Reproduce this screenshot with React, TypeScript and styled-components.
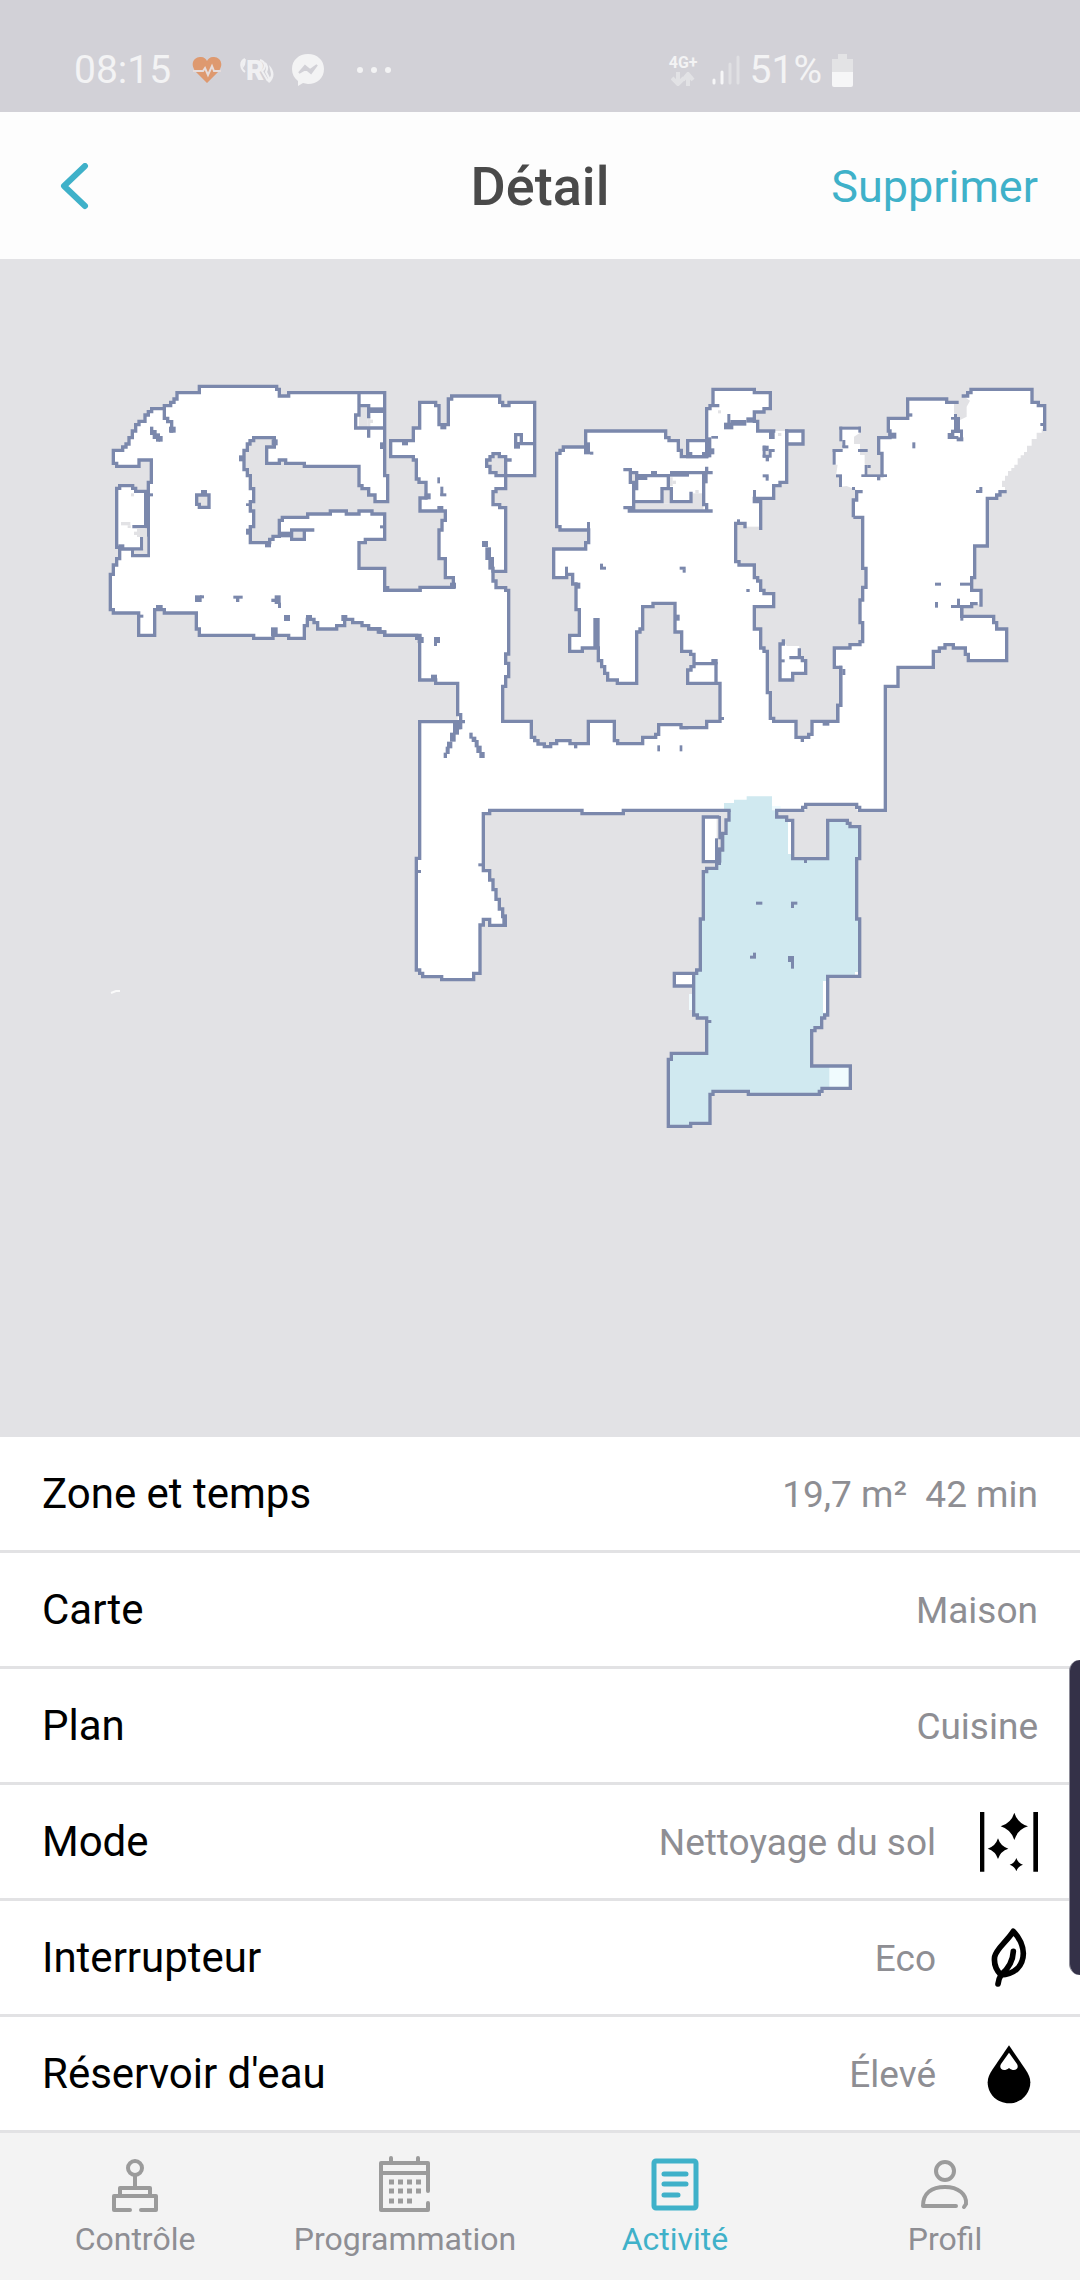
import React from "react";
import styled, { createGlobalStyle } from "styled-components";

const GlobalStyle = createGlobalStyle`
  * { box-sizing: border-box; }
  body { margin: 0; background: #f3f3f3; font-family: Roboto, "Liberation Sans", sans-serif; }
`;

const teal = "#3fb1c9";
const floorGrey = "#e2e2e5";
const wallBlue = "#7b88ac";

const Screen = styled.div`
  display: flex;
  flex-direction: column;
  width: 100%;
`;

const StatusBar = styled.div`
  display: flex;
  align-items: center;
  justify-content: space-between;
  height: 112px;
  padding: 28px 226px 0 74px;
  background: #d2d1d7;
  color: #f3f3f4;
  font-size: 39px;
  line-height: 44px;
`;

const StatusGroup = styled.div<{ $gap: number }>`
  display: flex;
  align-items: center;
  gap: ${(p) => p.$gap}px;
`;

const Clock = styled.span`
  padding-right: 3px;
`;

const Network = styled.div`
  display: flex;
  flex-direction: column;
  align-items: center;
  margin-right: 4px;
  font-size: 16px;
  font-weight: 700;
  line-height: 18px;
`;

const Dots = styled.svg`
  margin-left: 14px;
`;

const Header = styled.header`
  display: grid;
  grid-template-columns: 1fr auto 1fr;
  align-items: center;
  height: 147px;
  padding: 2px 42px 0;
  background: #fdfdfd;
`;

const Title = styled.h1`
  margin: 0;
  color: #4a4a4a;
  font-size: 54px;
  font-weight: 500;
  line-height: 60px;
`;

const HeaderButton = styled.button<{ $end?: boolean }>`
  display: flex;
  justify-self: ${(p) => (p.$end ? "end" : "start")};
  padding: ${(p) => (p.$end ? "0" : "0 14px")};
  border: 0;
  background: none;
  color: ${teal};
  font: inherit;
  font-size: 45px;
  line-height: 52px;
`;

const MapArea = styled.main`
  background: ${floorGrey};
`;

const MapDrawing = styled.svg`
  display: block;
  width: 100%;
  height: auto;
`;

const Details = styled.section`
  position: relative;
  background: #fff;
`;

const DetailList = styled.dl`
  margin: 0;
`;

const Row = styled.div`
  display: flex;
  align-items: center;
  height: 116px;
  padding: 0 42px;
  border-bottom: 3px solid #e2e2e4;
`;

const Label = styled.dt`
  flex: 1;
  color: #000;
  font-size: 42px;
  line-height: 48px;
`;

const Value = styled.dd`
  display: flex;
  align-items: center;
  gap: 42px;
  margin: 0;
  color: #8e8e93;
  font-size: 37px;
  line-height: 44px;
  white-space: pre;
`;

const ValueText = styled.span`
  padding-top: 2px;
`;

const EdgeHandle = styled.div`
  position: absolute;
  top: 223px;
  right: 0;
  width: 11px;
  height: 315px;
  border-left: 1px solid #8e8d99;
  border-radius: 14px 0 0 14px;
  background: #343148;
`;

const TabBar = styled.nav`
  display: grid;
  grid-template-columns: repeat(4, 1fr);
  height: 147px;
  background: #f3f3f3;
`;

const Tab = styled.button<{ $active?: boolean }>`
  display: flex;
  flex-direction: column;
  align-items: center;
  gap: 4px;
  padding: 23px 0 0;
  border: 0;
  background: none;
  color: ${(p) => (p.$active ? teal : "#8e8e93")};
  font: inherit;
  font-size: 32px;
  line-height: 38px;

  svg { color: ${(p) => (p.$active ? teal : "#9b9b9b")}; }
`;

type Blob = [number, number, number, number];

/* Each survey tile is traced at three units per map pixel from its own origin. */
interface Tile {
  x: number;
  y: number;
  walls: string;
  floorEnd?: string;
  details?: string;
  blobs?: Blob[];
  gaps?: Blob[];
}

const tiles: Tile[] = [
  {
    x: 90,
    y: 360,
    walls:
      "M990,826H884V816H865V807H836V797H816V788H788V778H764V797H740V807H683V788H672V778H652V797H643V835H596V826H549V835H491V826H328V807H319V759H223V749H194V826H146V759H70V749H61V643H70V615H80V596H89V567H128V587H175V367H184V300H147V319H80V310H70V271H98V261H108V252H117V233H127V213H137V194H147V184H165V165H175V155H185V146H223V137H242V127H252V117H261V98H328V79H560V88H568V108H596V98H884V347H893V425H855V405H836V386H816V377H807V319H643V310H587V300H568V310H530V261H553V233H491V242H480V252H472V271H462V329H472V347H481V386H491V425H481V453H491V500H481V548H539V538H549V529H568V481H577V472H653V462H721V453H769V462H807V453H846V462H884V538H826V548H807V625H884V683H893V691H990",
    details:
      "M807,98V165H797V204H884M807,137H836V170M836,204V228M223,146V175H233V185H245V213M640,510H668M132,500H165M155,534V567H89M605,510H643V538H605V515M320,405H357V442H328V433H320V405",
    blobs: [
      [836, 142, 50, 17], [870, 247, 12, 20], [237, 200, 20, 18], [180, 200, 10, 25], [188, 210, 12, 27], [198, 220, 12, 25], [206, 228, 12, 17],
      [447, 286, 12, 18], [333, 390, 18, 12], [468, 430, 12, 8], [468, 506, 14, 18], [525, 548, 18, 14], [565, 515, 40, 17], [870, 496, 12, 9],
      [315, 706, 20, 20], [330, 706, 12, 9], [430, 707, 28, 9], [438, 712, 10, 14], [554, 706, 18, 26], [544, 716, 14, 10], [564, 728, 9, 16],
      [582, 765, 18, 18], [543, 802, 20, 26], [754, 765, 18, 18], [648, 765, 18, 15], [198, 735, 20, 16], [146, 764, 14, 9], [175, 400, 14, 9],
      [162, 394, 17, 108], [85, 553, 18, 17], [545, 238, 18, 18],
    ],
    gaps: [[807, 141, 26, 60], [833, 170, 8, 30], [840, 179, 9, 10], [610, 515, 30, 20], [324, 409, 30, 24], [332, 430, 22, 9]],
  },
  {
    x: 90,
    y: 360,
    walls: "M94,562H80V385H89V377H128V385H137V394H175",
    floorEnd: "V500H165V567H94Z",
    gaps: [[93, 486, 28, 10], [113, 496, 9, 8], [123, 400, 9, 9], [132, 390, 9, 9], [132, 515, 24, 10], [141, 505, 30, 26], [160, 530, 12, 52], [132, 572, 38, 10]],
  },
  {
    x: 370,
    y: 360,
    walls:
      "M44,691H150V682H250V653H226V596H207V510H216V481H226V453H150V414H168V367H147V357H139V300H130V290H62V242H130V204H149V127H197V137H207V194H235V117H245V108H389V127H398V137H417V127H494V347H407V386H378V395H369V434H389V443H407V634H369V663H378V683H407V691H416V882H407V910H416V950H407V979H398V1084H484V1132H494V1142H504V1152H523V1160H542V1151H560V1142H600V1151H655V1084H733V1142H743V1151H818V1132H857V1123H866V1094H933V1103H950",
    floorEnd: "V1340H150V1084H263V970H197V960H150V826H44Z",
    details:
      "M0,806H30V816H44V826H140V835H149V960H197V970H263V1064H272V1103M454,251H494M437,224H454V251H437ZM369,290V281H388V290H407V347H378V338H360V319H350V300H360V290ZM407,300H420",
    blobs: [
      [432, 250, 18, 16], [202, 352, 8, 18], [211, 380, 9, 28], [211, 400, 18, 9], [164, 400, 18, 18], [202, 438, 18, 14], [96, 242, 18, 14], [211, 190, 18, 18],
      [336, 543, 18, 18], [346, 562, 17, 38], [355, 591, 17, 38], [364, 620, 10, 18], [240, 668, 18, 18], [143, 831, 18, 18], [192, 831, 18, 18], [192, 849, 9, 9], [183, 944, 18, 18],
      [249, 1084, 18, 40], [258, 1098, 14, 10], [240, 1118, 17, 27], [231, 1145, 16, 20], [227, 1160, 12, 22], [221, 1178, 10, 16],
      [298, 1118, 10, 18], [305, 1130, 14, 16], [314, 1140, 12, 22], [319, 1157, 16, 22], [328, 1176, 16, 18], [612, 1151, 10, 14], [862, 1156, 8, 18], [929, 1156, 8, 18],
    ],
    gaps: [[369, 285, 19, 55], [354, 300, 20, 19], [364, 294, 40, 42], [382, 320, 22, 24]],
  },
  {
    x: 540,
    y: 360,
    walls:
      "M425,1103H500V1084H540V970H443V930H453V920H462V883H452V874H425V816H405V730H339V740H308V807H300V816H290V970H232V960H203V940H194V920H185V902H175V864H127V874H89V826H118V749H108V672H98V643H80V653H41V567H137V548H146V510H60V500H50V280H60V271H70V261H137V213H377V233H387V242H415V271H424V290H500V146H510V137H519V88H643V98H691V146H672V156H643V184H653V213H701M740,213V367H720V377H701V415H643V425H662V505M615,500V490H587V605H597V615H643V653H653V663H662V691H672V701H701V740H643V807H662V864H672V874H682V998H691V1075H701V1084H768V1132H806V1123H816V1084H893V1036H902V922",
    floorEnd: "V1333H425Z",
    details:
      "M255,329H271V367H281V425H366V386H394V425H453V400M281,425V443H255M268,453H513M271,338H290V386M290,347H385V386M447,338H513M500,325V338M491,347V434H500V453M462,911H528V970M510,137H533",
    blobs: [
      [500, 232, 14, 60], [514, 228, 20, 8], [505, 265, 18, 18], [443, 276, 14, 14], [486, 276, 14, 14],
      [290, 343, 32, 17], [333, 333, 18, 12], [390, 333, 57, 17], [488, 338, 15, 32],
      [132, 247, 18, 36], [150, 275, 10, 9], [141, 486, 9, 30], [75, 620, 9, 25], [105, 668, 16, 18], [180, 611, 9, 18], [189, 620, 9, 9], [419, 620, 18, 9], [428, 628, 9, 10],
      [619, 687, 10, 9], [160, 774, 19, 90], [405, 764, 14, 18], [514, 897, 19, 16], [540, 1071, 12, 9],
      [552, 188, 28, 20], [562, 162, 9, 30], [571, 180, 48, 17], [619, 172, 28, 16], [687, 213, 17, 24],
      [668, 257, 9, 36], [668, 257, 18, 16], [686, 267, 18, 9], [686, 275, 9, 18], [668, 284, 20, 9], [677, 290, 10, 14], [668, 343, 18, 9], [677, 350, 9, 12],
      [639, 390, 9, 36], [648, 415, 18, 12], [591, 478, 9, 12], [782, 1132, 10, 14], [848, 1086, 20, 11],
    ],
    gaps: [[285, 430, 205, 18], [370, 390, 20, 40], [457, 400, 30, 45], [466, 390, 10, 10], [390, 352, 8, 26], [398, 362, 10, 10], [275, 342, 11, 24], [677, 273, 9, 10], [714, 219, 10, 9], [534, 151, 9, 9], [592, 500, 66, 5]],
  },
  {
    x: 540,
    y: 360,
    walls: "M500,290H443V242H500",
  },
  { x: 540, y: 360, walls: "M740,213H789V252H740Z" },
  {
    x: 540,
    y: 360,
    walls: "M730,843V852H720V960H758V940H797V902H787V893H753M778,893V870",
    floorEnd: "V858H740Z",
    blobs: [[720, 898, 14, 9]],
  },
  {
    x: 780,
    y: 360,
    walls:
      "M173,1084V1036H182V922H163V864H210V854H240V845H248V788H240V720H248V682H258V625H248V472H225M220,467V420H230V395H243M200,378L182,380V347H168M173,314H163V271H187V240H182V204H240V218M222,230V252H240V285H254V310L258,347H306V280H296V233H330V213H325V175H383V117H500V127H531M522,130V160L540,180L560,170V140L570,122L550,108H563V98H573V88H756V127H775V137H794V208M794,208H785V218H770V237H755V257H741V276H732V286H722V295H713V314H703V324H694V333H684V347H675V362H666V381H675M675,395H660V405H650V415H622V558H584V653H575V691H603V735M588,731H575V740H545V769H641V788H650V807H680V902H565V883H556V864H520V854H495V864H478V874H460V922H354V979H316V1351",
    floorEnd: "H230V1333H173Z",
  },
  {
    x: 380,
    y: 640,
    walls:
      "M250,245H119V655H109V990H119V1000H128V1010H185V1019H281V1000H300V855H310V838H329V856H375V830H368V807H358V778H348V749H339V720H329V692H310V521H329V511H606V521H730V511H1047",
    floorEnd: "V330H250Z",
    blobs: [[295, 670, 12, 9], [113, 690, 10, 9], [367, 823, 14, 38]],
  },
];

/* Loose wall fragments around the right-hand room. */
const rightRoomBlobs: Blob[] = [
  [383, 160, 14, 10], [325, 218, 24, 18], [397, 247, 9, 18], [513, 171, 14, 8], [522, 162, 9, 12], [522, 171, 18, 45], [513, 209, 36, 10], [503, 219, 20, 18], [530, 232, 20, 12], [540, 209, 9, 30],
  [520, 228, 15, 9], [781, 189, 14, 9], [588, 390, 19, 9], [598, 381, 9, 10], [465, 668, 18, 9], [540, 668, 35, 9], [465, 726, 9, 17], [513, 735, 66, 9], [531, 716, 9, 20], [541, 740, 9, 42],
  [187, 927, 9, 18], [216, 381, 9, 9], [244, 343, 77, 8], [291, 350, 10, 11], [254, 315, 8, 30], [262, 315, 10, 9], [234, 267, 29, 9], [187, 256, 18, 9], [187, 240, 9, 22],
  [158, 267, 9, 47], [158, 267, 30, 9], [168, 343, 18, 9], [177, 347, 9, 34], [178, 200, 9, 44], [178, 200, 65, 9], [235, 200, 8, 18],
];

const rightRoomWalls =
  "M173,1084V1036H182V922H163V864H210V854H240V845H248V788H240V720H248V682H258V625H248V472H225M220,467V420H230V395H243M306,347V280H296V233H330V213H325V175H383V117H500V127H531M550,108H563V98H573V88H756V127H775V137H794V208M675,395H660V405H650V415H622V558H584V653H575V691H603V735M588,731H575V740H545V769H641V788H650V807H680V902H565V883H556V864H520V854H495V864H478V874H460V922H354V979H316V1351";

const RIGHT_ROOM = 7;

const kitchenWalls =
  "M267,331V360H258V400H248V450H238V490H230V505H200V515H190V657H181V810H170V820H161V945H172V954H200V1060H94V1078H85V1279H152V1270H210V1183H219V1174H325V1183H538V1174H546V1165H631V1098H515V992H525V983H545V954H554V945H563V829H659V657H650V476H659V380H630V370H622V361H563V476H458V361H440V351H410V331";

const kitchenBlobs: Blob[] = [
  [242, 397, 10, 55], [235, 348, 8, 70], [232, 442, 12, 46], [225, 415, 9, 73], [348, 605, 19, 9], [453, 605, 19, 9], [453, 610, 9, 14], [330, 767, 18, 9], [339, 758, 9, 14],
  [444, 768, 18, 18], [453, 780, 9, 26], [492, 480, 9, 9], [204, 960, 10, 9], [242, 51, 10, 9],
];

const asFloor = (walls: string) => "M" + walls.slice(1).replace(/M/g, "L");

const Blobs = ({ items, fill }: { items: Blob[]; fill: string }) => (
  <g fill={fill}>
    {items.map(([x, y, w, h], i) => (
      <rect key={i} x={x} y={y} width={w} height={h} />
    ))}
  </g>
);

const place = (x: number, y: number) => `translate(${x} ${y}) scale(${1 / 3})`;

function FloorPlan() {
  return (
    <MapDrawing viewBox="0 259 1080 1178" role="img" aria-label="Carte de la maison">
      {tiles.map((t, i) => (
        <path key={i} transform={place(t.x, t.y)} d={asFloor(t.walls) + (t.floorEnd ?? "")} fill="#fff" />
      ))}
      <g transform={place(640, 700)}>
        <path d="M0,300H497V331H0ZM650,300H736V331H659V322H650Z" fill="#fff" />
        <path d={kitchenWalls + "H396V289H320V299H282V309H252V331Z"} fill="#d0e9f0" />
        <path d="M396,318H422V331H396ZM568,1098H631V1163H568ZM147,882H160V930H147Z" fill="#f0fbfe" />
        <path d="M444,365H456V462H444ZM645,816H657V828H645ZM549,843H562V938H549ZM103,820H161V858H103ZM190,351H230V485H190Z" fill="#fff" />
      </g>
      {tiles.map((t, i) => (
        <g key={i} transform={place(t.x, t.y)}>
          {t.gaps && <Blobs items={t.gaps} fill={floorGrey} />}
          <path
            d={(i === RIGHT_ROOM ? rightRoomWalls : t.walls) + (t.details ?? "")}
            fill="none"
            stroke={wallBlue}
            strokeWidth="10"
            strokeLinecap="square"
          />
          {t.blobs && <Blobs items={t.blobs} fill={wallBlue} />}
        </g>
      ))}
      <g transform={place(780, 360)}>
        <Blobs items={rightRoomBlobs} fill={wallBlue} />
      </g>
      <g transform={place(640, 700)}>
        <path
          d={kitchenWalls + "H488V322H497V313H650V322H659V331H736M161,820H103V858H161M238,351H190V485H238"}
          fill="none"
          stroke={wallBlue}
          strokeWidth="10"
        />
        <Blobs items={kitchenBlobs} fill={wallBlue} />
      </g>
      <path d="M111,993l5,-2h4" fill="none" stroke="#fafafa" strokeWidth="2" />
    </MapDrawing>
  );
}

const HeartIcon = () => (
  <svg width="30" height="28" viewBox="0 0 30 28">
    <path d="M15 27 3 15C-3 6 4 0 9 1c3 0 5 2 6 4 1-2 3-4 6-4 5-1 12 5 6 14Z" fill="#de996f" />
    <path d="M1 15h10l2-3 3 7 4-9 2 5h7" fill="none" stroke="#e6dcdb" strokeWidth="2" />
  </svg>
);

const RIcon = () => (
  <svg width="34" height="44" viewBox="0 -8 34 44" fill="none" stroke="#f0f0f2">
    <path d="M5 3C-1 6 1 13 5 16" strokeWidth="2" />
    <path d="M6 3C2 5 1 8 3 12L5 9Z" fill="#f0f0f2" stroke="none" />
    <text x="6" y="24" fill="#f0f0f2" stroke="none" fontSize="28" fontWeight="900" fontFamily="Roboto">R</text>
    <path d="M20 4c6 2 6 8 2 11l6 10M25 7c3 3 2 7 1 9l4 8" strokeWidth="2" />
    <path d="M29 9c6 6 6 13 0 18l-3-4c3 0 5-2 5-5Z" fill="#f0f0f2" stroke="none" />
  </svg>
);

const MessengerIcon = () => (
  <svg width="32" height="32" viewBox="0 0 32 32">
    <path d="M16 0C25 0 32 6 32 15s-7 15-16 15l-5-1-5 3v-5C2 24 0 20 0 15 0 6 7 0 16 0Z" fill="#f3f3f4" />
    <path d="m7 19 6-7 5 4 7-5-6 8-5-4Z" fill="#d2d1d7" stroke="#d2d1d7" strokeWidth="2" />
  </svg>
);

const Arrows = () => (
  <svg width="24" height="14" viewBox="0 0 24 14" fill="none" stroke="#e2e2e5" strokeWidth="4">
    <path d="M7 0v12M1 6l6 6 6-6M17 14V2M12 8l5-6 5 6" />
  </svg>
);

const Signal = () => (
  <svg width="28" height="30" viewBox="0 0 28 30" strokeWidth="3" strokeLinecap="round">
    <path d="M2 25v3M10 17v11" stroke="#f6f6f7" />
    <path d="M18 9v19M26 2v26" stroke="#e0e0e3" />
  </svg>
);

const Battery = () => (
  <svg width="22" height="33" viewBox="0 0 22 33">
    <path d="M6 0h9v5h6v13H0V5h6Z" fill="#e3e3e5" />
    <path d="M0 18h21v13q0 2-2 2H2q-2 0-2-2Z" fill="#f6f6f7" />
  </svg>
);

const star = (x: number, y: number, r: number) => {
  const k = r / 3.4;
  return `M${x},${y - r}Q${x + k * 0.8},${y - k * 0.8} ${x + r},${y}Q${x + k * 0.8},${y + k * 0.8} ${x},${y + r}Q${x - k * 0.8},${y + k * 0.8} ${x - r},${y}Q${x - k * 0.8},${y - k * 0.8} ${x},${y - r}Z`;
};

const ModeIcon = () => (
  <svg width="60" height="60" viewBox="-3 0 180 180">
    <path
      d={"M3,0H16V179H3ZM163,0H177V179H163Z" + star(106, 43, 41) + star(57, 110, 31) + star(112, 158, 20)}
    />
  </svg>
);

const LeafIcon = () => (
  <svg width="60" height="60" viewBox="-3 0 180 180" fill="none" stroke="#000" strokeWidth="17" strokeLinejoin="round" strokeLinecap="round">
    <path d="M103,10C118,26 132,48 133,76C133,115 105,140 66,141C50,125 44,108 47,86C52,62 82,42 103,10Z" />
    <path d="M103,70C102,95 88,122 66,141Q60,150 57,168" />
  </svg>
);

const DropIcon = () => (
  <svg width="60" height="60" viewBox="-3 0 180 180">
    <path d="M90,4L139,76C148,90 154,101 154,115C154,150 126,178 90,178C54,178 26,150 26,115C26,101 32,90 41,76Z" />
    <path d="M90,26L114,60C122,74 106,86 90,72C74,86 58,74 66,60Z" fill="#fff" />
  </svg>
);

const tabSvg = { width: 60, height: 60, viewBox: "0 0 60 60", fill: "none", stroke: "currentColor", strokeWidth: 4, strokeLinecap: "round", strokeLinejoin: "round" } as const;

const ControlIcon = () => (
  <svg {...tabSvg}>
    <circle cx="30" cy="12" r="7" />
    <path d="M30 19v13M15 40v-8h30v8M25 54H9V40h42v14H36" />
  </svg>
);

const CalendarIcon = () => (
  <svg {...tabSvg}>
    <path d="M53 35V7H6v47h47v-7M16 2v5M43 2v5" />
    <path d="M6 17h47" />
    <path d="M14 26h32M14 35h32M14 45h23" strokeWidth="5" strokeDasharray="5 4" strokeLinecap="butt" />
  </svg>
);

const ActivityIcon = () => (
  <svg {...tabSvg} strokeWidth={5}>
    <rect x="9" y="5" width="42" height="47" rx="2" />
    <path d="M19 18h22M19 28h22M19 39h14" />
  </svg>
);

const ProfileIcon = () => (
  <svg {...tabSvg}>
    <circle cx="30" cy="15" r="9" />
    <path d="M41 50H8C8 37 17 31 30 31s22 7 21 17l-2 3" />
  </svg>
);

const rows: { label: string; value: string; icon?: React.ReactNode }[] = [
  { label: "Zone et temps", value: "19,7 m²  42 min" },
  { label: "Carte", value: "Maison" },
  { label: "Plan", value: "Cuisine" },
  { label: "Mode", value: "Nettoyage du sol", icon: <ModeIcon /> },
  { label: "Interrupteur", value: "Eco", icon: <LeafIcon /> },
  { label: "Réservoir d'eau", value: "Élevé", icon: <DropIcon /> },
];

const tabs = [
  { label: "Contrôle", icon: <ControlIcon /> },
  { label: "Programmation", icon: <CalendarIcon /> },
  { label: "Activité", icon: <ActivityIcon />, active: true },
  { label: "Profil", icon: <ProfileIcon /> },
];

export default function App() {
  return (
    <Screen>
      <GlobalStyle />
      <StatusBar>
        <StatusGroup $gap={18}>
          <Clock>08:15</Clock>
          <HeartIcon />
          <RIcon />
          <MessengerIcon />
          <Dots width="36" height="8" viewBox="0 0 36 8" fill="#f3f3f4">
            <circle cx="4" cy="4" r="3" />
            <circle cx="18" cy="4" r="3" />
            <circle cx="32" cy="4" r="3" />
          </Dots>
        </StatusGroup>
        <StatusGroup $gap={10}>
          <Network>
            4G+
            <Arrows />
          </Network>
          <Signal />
          <span>51%</span>
          <Battery />
        </StatusGroup>
      </StatusBar>
      <Header>
        <HeaderButton type="button" aria-label="Retour">
          <svg width="34" height="48" viewBox="0 2 34 48" fill="none" stroke="currentColor" strokeWidth="6" strokeLinecap="round" strokeLinejoin="round">
            <path d="M29 5 8 25l21 20" />
          </svg>
        </HeaderButton>
        <Title>Détail</Title>
        <HeaderButton type="button" $end>
          Supprimer
        </HeaderButton>
      </Header>
      <MapArea>
        <FloorPlan />
      </MapArea>
      <Details>
        <DetailList>
          {rows.map((r) => (
            <Row key={r.label}>
              <Label>{r.label}</Label>
              <Value>
                <ValueText>{r.value}</ValueText>
                {r.icon}
              </Value>
            </Row>
          ))}
        </DetailList>
        <EdgeHandle />
      </Details>
      <TabBar>
        {tabs.map((t) => (
          <Tab key={t.label} type="button" $active={t.active} aria-current={t.active ? "page" : undefined}>
            {t.icon}
            {t.label}
          </Tab>
        ))}
      </TabBar>
    </Screen>
  );
}
